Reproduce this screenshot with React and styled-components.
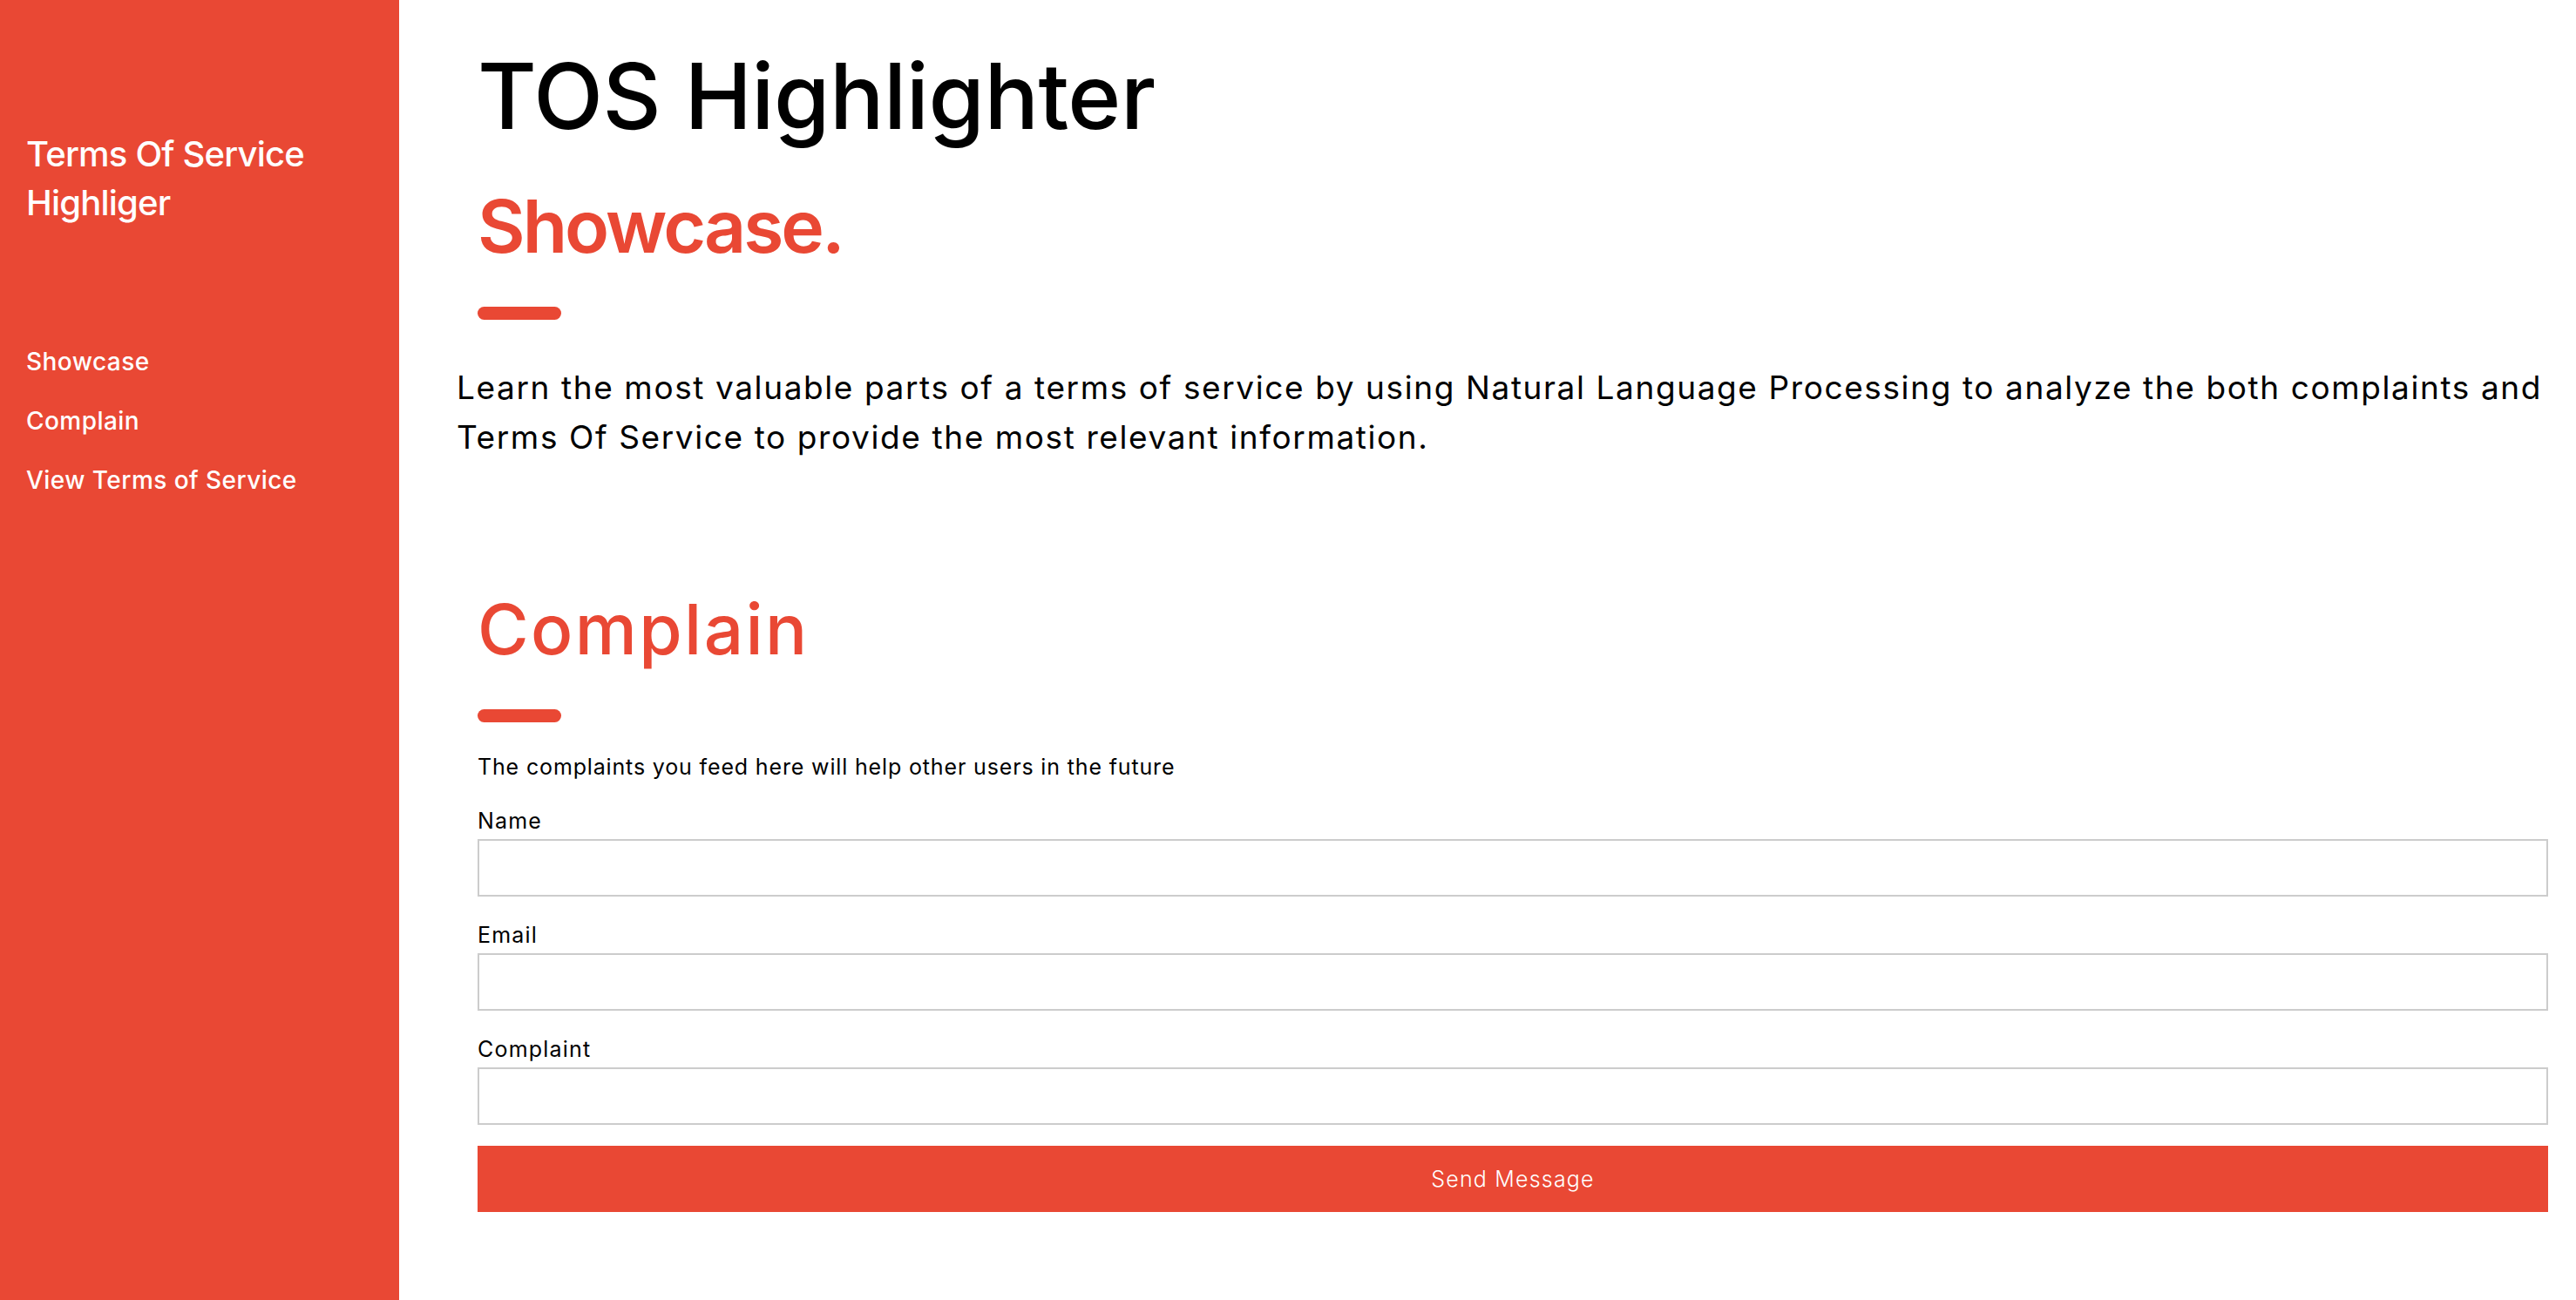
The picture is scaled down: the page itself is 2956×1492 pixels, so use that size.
import React from 'react';
import styled, { createGlobalStyle } from 'styled-components';

const red = '#e94834';

const GlobalStyle = createGlobalStyle`
  html, body {
    margin: 0;
    padding: 0;
    background: #fff;
    font-family: Inter, "Noto Sans", sans-serif;
    color: #000;
  }
  * { box-sizing: border-box; }
`;

const Layout = styled.div`
  display: grid;
  grid-template-columns: 458px 1fr;
  min-height: 100vh;
`;

const Sidebar = styled.aside`
  background: ${red};
  color: #fff;
  padding: 149px 20px 0 30px;
  display: flex;
  flex-direction: column;
`;

const Brand = styled.div`
  font-size: 40px;
  line-height: 56px;
  font-weight: 500;
  letter-spacing: -0.8px;
  margin-bottom: 120px;
`;

const NavList = styled.nav`
  display: flex;
  flex-direction: column;
`;

const NavLink = styled.a`
  color: #fff;
  text-decoration: none;
  font-size: 28px;
  line-height: 68px;
  font-weight: 500;
  letter-spacing: 0.45px;
`;

const Main = styled.main`
  padding: 48px 32px 60px 66px;
`;

const Title = styled.h1`
  margin: 0 0 36px 24px;
  font-size: 104px;
  line-height: 125px;
  font-weight: 500;
  letter-spacing: -0.5px;
`;

const Section = styled.section`
  margin-top: ${p => p.$gap || 0}px;
`;

const SectionHeading = styled.h2`
  margin: 0;
  padding-left: 24px;
  color: ${red};
  font-size: ${p => p.$size}px;
  line-height: ${p => Math.round(p.$size * 1.2)}px;
  font-weight: ${p => p.$weight || 500};
  letter-spacing: ${p => p.$tracking || 0}px;
`;

const Bar = styled.div`
  width: 96px;
  height: 15px;
  border-radius: 8px;
  background: ${red};
  margin: ${p => p.$top}px 0 0 24px;
`;

const Lead = styled.p`
  margin: 49px 0 0;
  font-size: 37px;
  line-height: 57px;
  font-weight: 400;
  letter-spacing: 1.6px;
`;

const Form = styled.form`
  margin: 0 0 0 24px;
  display: flex;
  flex-direction: column;
`;

const Hint = styled.p`
  margin: 33px 0 25px;
  font-size: 25px;
  line-height: 37px;
  letter-spacing: 0.85px;
`;

const Field = styled.label`
  display: flex;
  flex-direction: column;
  gap: 2px;
  margin-bottom: 26px;
  font-size: 25px;
  line-height: 37px;
  letter-spacing: 1.2px;

  &:last-of-type {
    margin-bottom: 24px;
  }
`;

const Input = styled.input`
  height: 66px;
  width: 100%;
  border: 2px solid #cccccc;
  font-size: 25px;
  padding: 0 16px;
  font-family: inherit;
  outline: none;
`;

const SendButton = styled.button`
  height: 76px;
  border: none;
  background: ${red};
  color: #fff;
  font-family: inherit;
  font-size: 25px;
  font-weight: 300;
  letter-spacing: 1.2px;
  cursor: pointer;
`;

const App = () => (
  <>
    <GlobalStyle />
    <Layout>
      <Sidebar>
        <Brand>
          Terms Of Service
          <br />
          Highliger
        </Brand>
        <NavList>
          <NavLink href="#showcase">Showcase</NavLink>
          <NavLink href="#complain">Complain</NavLink>
          <NavLink href="#tos">View Terms of Service</NavLink>
        </NavList>
      </Sidebar>
      <Main>
        <Title>TOS Highlighter</Title>
        <Section id="showcase">
          <SectionHeading $size={84} $weight={600} $tracking={-3}>Showcase.</SectionHeading>
          <Bar $top={42} />
          <Lead>
            Learn the most valuable parts of a terms of service by using Natural Language
            Processing to analyze the both complaints and Terms Of Service to provide the most
            relevant information.
          </Lead>
        </Section>
        <Section id="complain" $gap={144}>
          <SectionHeading $size={80} $tracking={2.4}>Complain</SectionHeading>
          <Bar $top={44} />
          <Form onSubmit={e => e.preventDefault()}>
            <Hint>The complaints you feed here will help other users in the future</Hint>
            <Field>
              Name
              <Input type="text" />
            </Field>
            <Field>
              Email
              <Input type="email" />
            </Field>
            <Field>
              Complaint
              <Input type="text" />
            </Field>
            <SendButton type="submit">Send Message</SendButton>
          </Form>
        </Section>
      </Main>
    </Layout>
  </>
);

export default App;
